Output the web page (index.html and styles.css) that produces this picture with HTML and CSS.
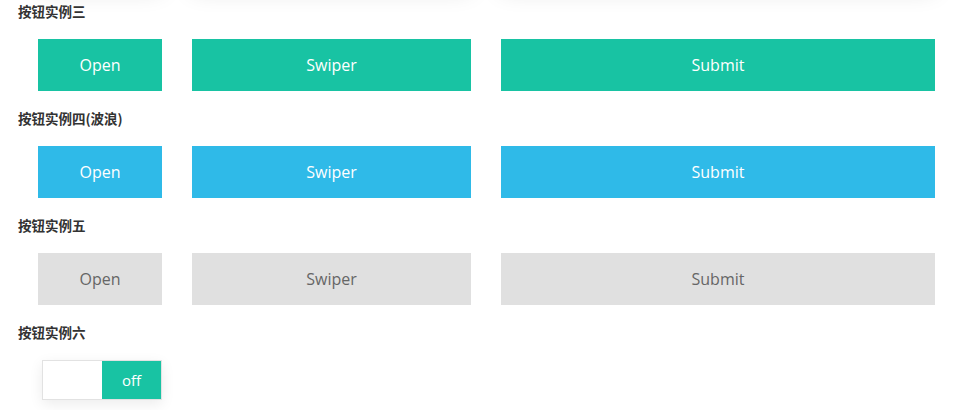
FILE: index.html
```html
<!DOCTYPE html>
<html lang="zh">
<head>
<meta charset="utf-8">
<title>按钮实例</title>
<link rel="stylesheet" href="styles.css">
</head>
<body>
<div class="page">
  <div class="shadow-row" aria-hidden="true">
    <span class="ghost btn-s"></span>
    <span class="ghost btn-m"></span>
    <span class="ghost btn-l"></span>
  </div>
  <section class="section">
    <h3 class="title">按钮实例三</h3>
    <div class="row">
      <button class="btn btn-s btn-green">Open</button>
      <button class="btn btn-m btn-green">Swiper</button>
      <button class="btn btn-l btn-green">Submit</button>
    </div>
  </section>
  <section class="section">
    <h3 class="title">按钮实例四(波浪)</h3>
    <div class="row">
      <button class="btn btn-s btn-blue">Open</button>
      <button class="btn btn-m btn-blue">Swiper</button>
      <button class="btn btn-l btn-blue">Submit</button>
    </div>
  </section>
  <section class="section">
    <h3 class="title">按钮实例五</h3>
    <div class="row">
      <button class="btn btn-s btn-grey">Open</button>
      <button class="btn btn-m btn-grey">Swiper</button>
      <button class="btn btn-l btn-grey">Submit</button>
    </div>
  </section>
  <section class="section">
    <h3 class="title">按钮实例六</h3>
    <div class="row row-toggle">
      <div class="toggle">
        <span class="toggle-blank"></span>
        <span class="toggle-off">off</span>
      </div>
    </div>
  </section>
</div>
</body>
</html>
```

FILE: styles.css
```css
html, body {
  margin: 0;
  padding: 0;
  background: #fff;
  overflow: hidden;
}
body {
  font-family: "Open Sans", "Noto Sans", sans-serif;
}
.page {
  margin-top: -70px;
}
.shadow-row {
  display: flex;
  gap: 30px;
  padding-left: 38px;
  margin-bottom: 20px;
}
.ghost {
  display: block;
  height: 52px;
  background: #fff;
  box-shadow: 0 8px 24px rgba(0, 0, 0, 0.14);
}
.section {
  padding-bottom: 18px;
}
.title {
  margin: 0 0 18px 18px;
  height: 19px;
  line-height: 19px;
  font-size: 13.5px;
  font-weight: 700;
  color: #333;
  font-family: "Noto Sans CJK SC", "Noto Sans", sans-serif;
}
.row {
  display: flex;
  gap: 30px;
  padding-left: 38px;
}
.btn {
  height: 52px;
  border: 0;
  margin: 0;
  padding: 0;
  font-family: "Open Sans", "Noto Sans", sans-serif;
  font-size: 16px;
  color: #fff;
  cursor: pointer;
}
.btn-s { width: 124px; }
.btn-m { width: 279px; }
.btn-l { width: 434px; }
.btn-green { background: #18c3a3; }
.btn-blue { background: #2fbae8; }
.btn-grey { background: #e0e0e0; color: #666; }
.row-toggle {
  padding-left: 42px;
}
.toggle {
  display: flex;
  width: 118px;
  height: 38px;
  border: 1px solid #e2e2e2;
  box-shadow: 0 4px 14px rgba(0, 0, 0, 0.08);
  background: #fff;
}
.toggle-blank {
  width: 59px;
}
.toggle-off {
  flex: 1;
  background: #18c3a3;
  color: #fff;
  font-size: 15px;
  display: flex;
  align-items: center;
  justify-content: center;
}
```
